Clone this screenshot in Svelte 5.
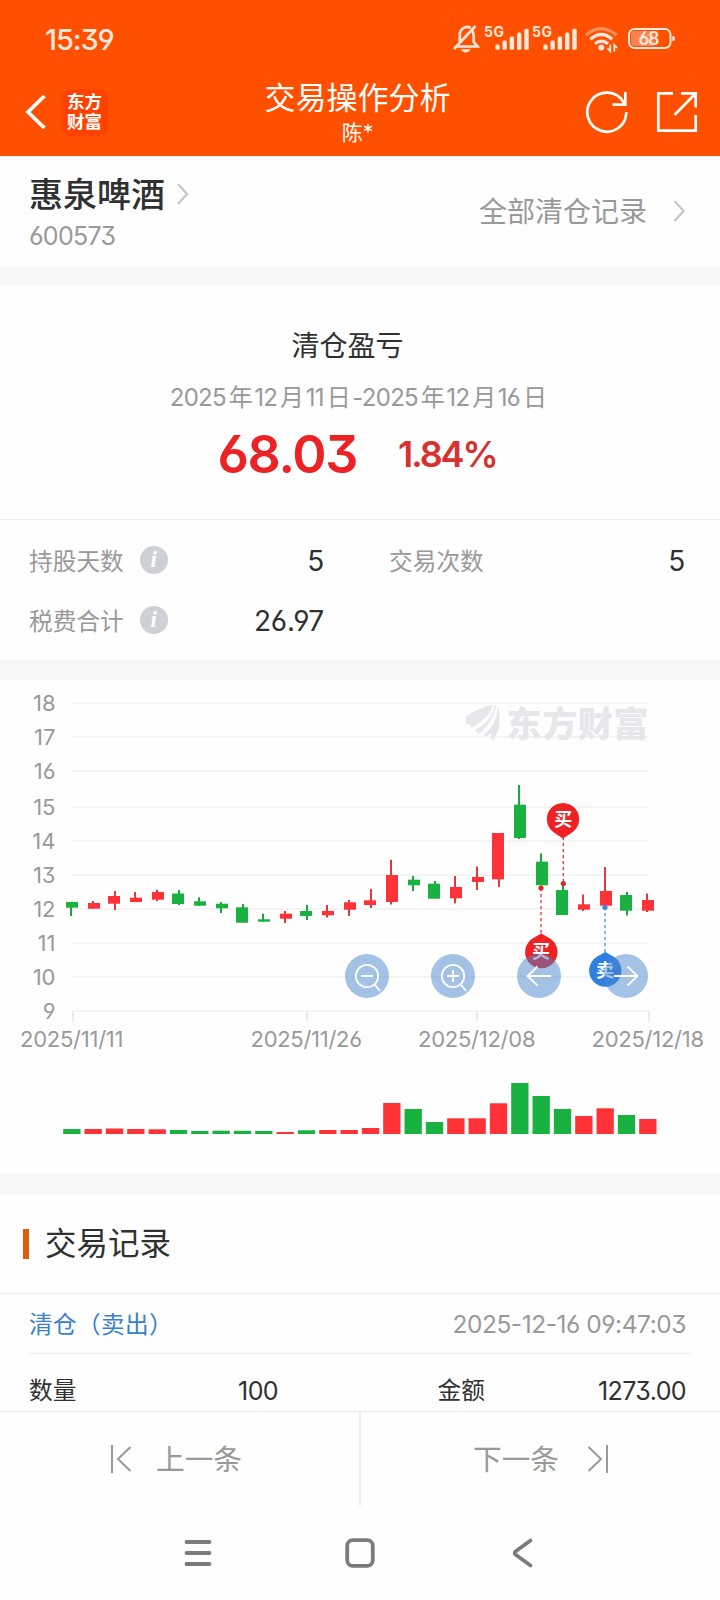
<script>
  const gridTop = [23, 57, 91, 127, 161, 195, 229, 263, 297, 331];

  const labels = gridTop.map((y, i) => ({ y, text: String(18 - i) }));

  const dates = [
    { text: '2025/11/11', x: 20, w: 103.5, tick: 73 },
    { text: '2025/11/26', x: 250.5, w: 111.5, tick: 307 },
    { text: '2025/12/08', x: 418, w: 117.5, tick: 477 },
    { text: '2025/12/18', x: 591.5, w: 112.5, tick: 649 }
  ];

  // direction, body top, body bottom, wick top, wick bottom, volume top
  const candles = [
    ['g', 222, 227.7, 222, 236, 449],
    ['r', 223, 228.7, 221, 228.7, 449],
    ['r', 216, 223.7, 211, 230, 448.5],
    ['r', 217.7, 222, 212, 222, 449],
    ['r', 212, 219.7, 209.7, 221, 449.3],
    ['g', 213.5, 224, 210, 225, 450],
    ['g', 221.3, 225.7, 217.3, 225.7, 451],
    ['g', 223.7, 228.3, 222, 233, 450.7],
    ['g', 227.3, 242.7, 224, 242.7, 450.8],
    ['g', 239.3, 241.7, 233.7, 241.7, 451],
    ['r', 233.7, 238.7, 231, 243, 452],
    ['g', 231, 236, 225, 240, 450.3],
    ['r', 231, 235.3, 225, 237.5, 450],
    ['r', 222.3, 229.7, 220, 236, 450],
    ['r', 220.3, 225, 209, 228, 448],
    ['r', 195, 222, 179.7, 224.5, 423],
    ['g', 199.7, 205.3, 196, 211, 429],
    ['g', 203.7, 218.7, 201, 218.7, 442],
    ['r', 207, 218.3, 196, 223.3, 438.3],
    ['r', 197, 202, 186.5, 210, 438.3],
    ['r', 153, 199.3, 153, 207, 423.3],
    ['g', 124.7, 158, 105, 159, 403],
    ['g', 181.7, 205.3, 173.5, 205.3, 416],
    ['g', 210, 235, 205, 235, 429],
    ['r', 224.3, 229.7, 214.5, 231, 436],
    ['r', 211, 225.7, 187, 225.7, 428.3],
    ['g', 215, 230.7, 212, 235.5, 435],
    ['r', 220, 230.7, 213.5, 232, 439]
  ].map(([dir, top, bottom, high, low, vol], i) => {
    const dx = (i * 64) / 3;
    return {
      color: dir === 'r' ? '#ff3337' : '#19b140',
      wickColor: dir === 'r' ? '#e2393c' : '#19a83e',
      top, bottom, high, low, vol,
      x: 66 + 2 * Math.round(dx / 2),
      wick: 70 + 2 * Math.ceil(dx / 2 - 0.01),
      vx: 63.2 + dx
    };
  });

  const signalBars = [[0, 44.5], [7.2, 40.5], [14.4, 36.5], [21.7, 32.5], [29, 28.8]];
</script>

<div class="screen">
  <header>
    <div class="status">
      <span class="time">15:39</span>
      <svg class="sys" width="240" height="78" viewBox="445 0 240 78" fill="none" stroke="#ffe8db">
        <path d="M457.5 46.5h20l-3.8-4.6V35a8 8 0 0 0-2.8-5.7M459.8 41.5v-6.4a7.6 7.6 0 0 1 11-7.3M454 49l21.5-23" stroke-width="2.7" />
        <path d="M461 49.2h9.5q-1.5 3.2-4.7 3.2t-4.8-3.2z" fill="#ffe8db" stroke="none" />
        {#each [0, 48] as shift}
          <text x={484 + shift} y="37.3" class="net" textLength="20">5G</text>
          {#each signalBars as [bx, by]}
            <rect x={495.3 + bx + shift} y={by} width="4.4" height={49.7 - by} rx="1.5" fill="#ffe8db" stroke="none" />
          {/each}
        {/each}
        <g stroke-width="3.2">
          <path d="M586 35.2q15.3-13.2 30.6 0" opacity=".42" />
          <path d="M590.3 39.2q11-9.4 22 0" />
          <path d="M595 43.8q6.5-5.5 13 0" />
        </g>
        <circle cx="601.3" cy="47.4" r="3" fill="#ffe8db" stroke="none" />
        <path d="M610.3 44.5v6.8l-2.8-3M614.3 51.8v-6.8l2.8 3" stroke-width="1.7" />
        <rect x="629" y="29" width="41.5" height="19" rx="5.5" stroke-width="2" />
        <path d="M634.5 31h20v15h-20a3.5 3.5 0 0 1-3.5-3.5v-8a3.5 3.5 0 0 1 3.5-3.5z" fill="#ff8350" stroke="none" />
        <path d="M672.3 36h.8q2 0 2 2.5t-2 2.5h-.8z" fill="#ffe8db" stroke="none" />
        <text x="638.5" y="45" class="pct" textLength="21">68</text>
      </svg>
    </div>
    <div class="navbar">
      <div class="left">
        <svg width="24" height="40" viewBox="0 0 24 40"><path d="M20.5 4L4 20l16.5 16" fill="none" stroke="#fff" stroke-width="3.7" /></svg>
        <div class="brand"><span>东方</span><span>财富</span></div>
      </div>
      <div class="heading"><h1>交易操作分析</h1><span class="owner">陈*</span></div>
      <div class="right">
        <svg width="44" height="44" viewBox="0 0 44 44" fill="none" stroke="#fff" stroke-width="2.7"><path d="M41.3 22a19.5 19.5 0 1 1-3-10.2l2.2 3M40.3 2v12.700H27.500" /></svg>
        <svg width="44" height="44" viewBox="0 0 44 44" fill="none" stroke="#fff" stroke-width="2.7"><path d="M18 3.3H3.3v37.4h37.4V25M26 3.3h14.7v14.2M40 4L19.5 25" /></svg>
      </div>
    </div>
  </header>

  <section class="stock">
    <div>
      <div class="name">惠泉啤酒<svg width="12" height="24" viewBox="0 0 12 24"><path d="M1 2l9 10-9 10" /></svg></div>
      <div class="code">600573</div>
    </div>
    <div class="all"><span>全部清仓记录</span><svg width="12" height="24" viewBox="0 0 12 24"><path d="M1.5 2l9 10-9 10" /></svg></div>
  </section>

  <section class="summary">
    <h2>清仓盈亏</h2>
    <p class="range"><b>2025</b>年<b>12</b>月<b>11</b>日<b>-2025</b>年<b>12</b>月<b>16</b>日</p>
    <div class="profit"><span class="amount">68.03</span><span class="rate">1.84%</span></div>
  </section>

  <section class="stats">
    <div class="stat"><span class="label">持股天数</span><i class="info">i</i><span class="num">5</span></div>
    <div class="stat"><span class="label">交易次数</span><span class="num">5</span></div>
    <div class="stat"><span class="label">税费合计</span><i class="info">i</i><span class="num">26.97</span></div>
  </section>

  <section class="chart">
    <svg width="720" height="494" viewBox="0 0 720 494">
      {#each labels as l}
        <rect x="72" y={l.y - 1} width="576" height="2" fill="#f4f4f4" />
        <text class="axis" x="55.5" y={l.y + 8} text-anchor="end">{l.text}</text>
      {/each}
      {#each dates as d}
        <rect x={d.tick - 1} y="331" width="2" height="10.5" fill="#ebebeb" />
        <text class="axis" x={d.x} y="366.7" textLength={d.w}>{d.text}</text>
      {/each}

      <g fill="#e6e6eb">
        <path d="M466 36q13-8 27-11.5-3 13-21 23l-1.500-2.500-4.500-1z" />
        <path d="M494.5 25q-1 14-19.5 25.5l3.500 3.500q14-10 18-29z" />
        <path d="M498 26q-1 19-14.5 29l3 2q2-3 4.500-4.500l.5 8.500q9-9 8-20-.3-10-1.500-15z" />
        <text class="mark" x="506.5" y="56.5" textLength="142">东方财富</text>
      </g>

      {#each candles as c}
        <rect x={c.wick} y={c.high} width="2" height={c.low - c.high} fill={c.wickColor} />
        <rect x={c.x} y={c.top} width="12" height={c.bottom - c.top} fill={c.color} />
        <rect x={c.vx} y={c.vol} width="17.3" height={454 - c.vol} fill={c.color} />
      {/each}

      <g stroke-dasharray="3.2 2.8" stroke-width="1.3">
        <path d="M563.3 157V203" stroke="#d9383a" />
        <path d="M541 208v46" stroke="#d9383a" />
        <path d="M605 227v46" stroke="#5591da" />
      </g>
      <circle cx="563.3" cy="203.5" r="2.6" fill="#d82b2d" />
      <circle cx="541" cy="208" r="2.6" fill="#d82b2d" />
      <circle cx="605" cy="227.3" r="2.6" fill="#3c82d8" />

      <path d="M563 158.5l-8-5.2a16.2 16.2 0 1 1 16 0z" fill="#f02124" />
      <text class="pin" x="563.2" y="146">买</text>
      <path d="M541.3 253.500l8 4.500a16.2 16.2 0 1 1-16 0z" fill="#f02124" />
      <text class="pin" x="541" y="278">买</text>
      <path d="M605.3 272l8 4.500a16.2 16.2 0 1 1-16 0z" fill="#2f7fe0" />
      <text class="pin" x="605" y="297">卖</text>

      <g fill="#4985cb" fill-opacity=".5">
        <circle cx="367" cy="296" r="22" /><circle cx="453" cy="296" r="22" />
        <circle cx="539" cy="296" r="22" /><circle cx="626" cy="296" r="22" />
      </g>
      <g fill="none" stroke="#fff" stroke-width="1.8">
        <circle cx="367" cy="296" r="11.2" /><path d="M361 296h12M374.500 304.500l5.500 6.500" />
        <circle cx="453" cy="296" r="11.2" /><path d="M447 296h12M453 290v12M460.500 304.500l5.500 6.500" />
        <path d="M551 296h-23M537.500 286.500l-10 9.500 10 9.500" />
        <path d="M614 296h23M627.500 286.500l10 9.500-10 9.500" />
      </g>
    </svg>
  </section>

  <section class="records">
    <div class="title">交易记录</div>
    <div class="record">
      <div class="row first"><span class="kind">清仓（卖出）</span><span class="when">2025-12-16 09:47:03</span></div>
      <div class="row second">
        <span>数量</span><span class="qty">100</span><span class="money">金额</span><span class="sum">1273.00</span>
      </div>
    </div>
  </section>

  <div class="pager">
    <div class="prev">
      <svg width="24" height="30" viewBox="0 0 24 30"><path d="M3 1v28M21.5 3L9 15l12.5 12" /></svg><span>上一条</span>
    </div>
    <div class="next">
      <span>下一条</span><svg width="24" height="30" viewBox="0 0 24 30"><path d="M21 1v28M2.5 3L15 15 2.5 27" /></svg>
    </div>
  </div>

  <nav>
    <svg width="32" height="32" viewBox="0 0 32 32"><path d="M4.5 5h23M4.5 16h23M4.5 27h23" /></svg>
    <svg width="32" height="32" viewBox="0 0 32 32"><rect x="3.2" y="3.2" width="25.6" height="25.6" rx="5.5" /></svg>
    <svg width="32" height="32" viewBox="0 0 32 32"><path d="M24.5 3.5L9.800 14.300q-2.200 1.700 0 3.400l14.700 10.800" /></svg>
  </nav>
</div>

<style>
  :global(body) { background: #fefefe; }
  .screen {
    width: 720px; height: 1600px; overflow: hidden; display: flex; flex-direction: column;
    background: #fefefe; color: #303030;
    font-family: Inter, "Noto Sans CJK SC", sans-serif;
    font-feature-settings: "cv03", "cv04", "cv09";
  }
  h1, h2, p { margin: 0; font-weight: 400; }
  svg { display: block; flex: none; }

  header { height: 156px; background: #ff5000; color: #fff; flex: none; }
  .status { height: 78px; display: flex; align-items: center; justify-content: space-between; padding: 0 35px 0 45px; }
  .time { font-size: 29px; font-weight: 500; color: #ffe8db; letter-spacing: -1.1px; }
  .net, .pct { fill: #ffe8db; stroke: none; font-weight: 700; }
  .net { font-size: 14px; }
  .pct { font-size: 18px; font-weight: 600; }
  .navbar { height: 78px; display: grid; grid-template-columns: 200px 1fr 200px; }
  .left { display: flex; align-items: center; gap: 13px; padding: 0 0 10px 24px; }
  .brand {
    width: 47px; height: 47px; border-radius: 9px; background: #ff4200; display: flex; flex-direction: column;
    align-items: center; justify-content: center; font-size: 17.5px; line-height: 20px; font-weight: 700;
  }
  .heading { text-align: center; padding: 1px 5px 0 0; }
  h1 { font-size: 31px; line-height: 37px; }
  .owner { display: block; font-size: 21px; line-height: 24px; margin-top: 5px; }
  .right { display: flex; align-items: center; justify-content: flex-end; gap: 26px; padding: 0 21px 10px 0; }

  .stock { height: 110px; border-bottom: 20px solid #f7f7f7; display: flex; justify-content: space-between; padding: 0 35px 0 29px; flex: none; }
  .stock path { fill: none; stroke: #c9c9c9; stroke-width: 2.4; }
  .name { display: flex; align-items: center; gap: 12px; height: 36px; margin-top: 18px; font-size: 34px; font-weight: 500; }
  .name svg { margin-top: 4px; }
  .code { margin-top: 11.5px; font-size: 25px; line-height: 28px; color: #999; letter-spacing: -.7px; }
  .all { display: flex; align-items: center; gap: 26px; font-size: 28px; color: #999; }
  .all span { padding-bottom: 3px; }

  .summary { height: 233px; box-sizing: border-box; padding: 46px 5px 0 0; text-align: center; flex: none; }
  h2 { font-size: 28px; line-height: 28px; padding-right: 20px; }
  .range { margin-top: 24px; font-size: 24px; line-height: 28px; color: #999; }
  .range b { font-weight: 400; letter-spacing: -.7px; margin: 0 2.8px 0 1.6px; }
  .profit { display: flex; justify-content: center; align-items: center; gap: 41px; height: 60px; margin-top: 12px; padding-right: 1px; font-weight: 600; }
  .amount { font-size: 52px; color: #ed2224; letter-spacing: -1.3px; }
  .rate { font-size: 36px; color: #d93030; letter-spacing: -2.1px; padding-bottom: 1px; }

  .stats {
    height: 161px; border-top: 1px solid #ebebeb; border-bottom: 20px solid #f7f7f7; box-sizing: border-box;
    display: grid; grid-template-columns: 295px 296px; grid-auto-rows: 60px; column-gap: 65px; padding: 11px 0 0 29px; flex: none;
  }
  .stat { display: flex; align-items: center; }
  .label { font-size: 23.7px; color: #999; padding-bottom: 2px; }
  .info {
    width: 28px; height: 28px; border-radius: 50%; background: #cdd0d5; color: #fff; margin: 0 0 2px 16px;
    font: italic 700 23px/27px "Liberation Serif", serif; text-align: center;
  }
  .num { margin: 0 0 0 auto; font-size: 28px; letter-spacing: -.2px; }

  .chart { height: 494px; border-bottom: 20px solid #f7f7f7; flex: none; }
  .axis { font-size: 22px; fill: #999; }
  .mark { font-size: 35px; font-weight: 900; }
  .pin { font-size: 18px; font-weight: 700; fill: #fff; text-anchor: middle; }

  .records { height: 217px; flex: none; }
  .title { height: 99px; display: flex; align-items: center; font-size: 31.5px; line-height: 30px; padding-left: 23px; box-sizing: border-box; }
  .title::before { content: ""; width: 6px; height: 30px; background: #e25a0c; margin-right: 16px; }
  .record { border-top: 1px solid #ebebeb; padding: 0 29px; }
  .row { display: flex; align-items: center; font-size: 23.7px; }
  .first { height: 59px; border-bottom: 1px solid #ebebeb; justify-content: space-between; padding-right: 5px; }
  .kind { color: #3a7fc9; letter-spacing: .3px; padding-bottom: 2px; }
  .when { color: #999; font-size: 24.5px; letter-spacing: -.45px; }
  .second {
    display: grid; grid-template-columns: 140px 109px 207px 1fr; height: 57px; padding: 14px 5px 0 0;
    box-sizing: border-box; line-height: 46px; align-items: start;
  }
  .qty, .sum { text-align: right; font-size: 25px; letter-spacing: -.6px; }
  .money { text-align: right; }

  .pager { height: 95px; box-sizing: border-box; border-top: 1px solid #ebebeb; display: grid; grid-template-columns: 1fr 1fr; color: #999; font-size: 28.7px; flex: none; }
  .pager > div { display: flex; align-items: center; box-sizing: border-box; }
  .pager span { padding-bottom: 4px; }
  .pager path { fill: none; stroke: #999; stroke-width: 2; }
  .prev { border-right: 1px solid #efefef; padding-left: 109px; gap: 23px; }
  .next { border-left: 1px solid #efefef; padding-left: 112px; gap: 27px; }

  nav { height: 94px; display: flex; align-items: center; justify-content: center; gap: 130px; flex: none; }
  nav path, nav rect { fill: none; stroke: #7b7b7b; stroke-width: 3.8; stroke-linecap: round; }
</style>
